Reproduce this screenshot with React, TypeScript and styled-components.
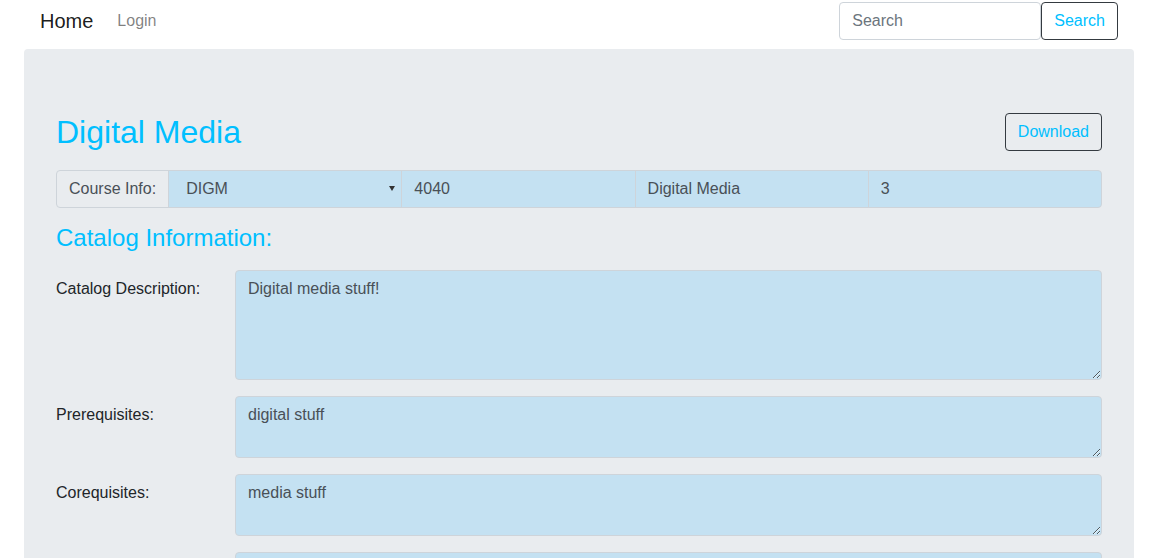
import { createGlobalStyle, styled } from 'styled-components';

const GlobalStyle = createGlobalStyle`
    * {
        box-sizing: border-box;
    }
    body {
        margin: 0;
        font-family: "Liberation Sans", Arial, sans-serif;
        font-size: 16px;
        line-height: 1.5;
        color: #212529;
        background: #fff;
    }
`;

const accent = '#00bfff';
const fieldBg = '#c4e1f2';

type Row = {
    label: string;
    value: string;
    rows: number;
};

const catalogRows: Row[] = [
    { label: 'Catalog Description:', value: 'Digital media stuff!', rows: 4 },
    { label: 'Prerequisites:', value: 'digital stuff', rows: 2 },
    { label: 'Corequisites:', value: 'media stuff', rows: 2 },
    { label: 'Restrictions:', value: '', rows: 2 },
];

export default function App() {
    return (
        <>
            <GlobalStyle />
            <Navbar>
                <Brand href='#'>Home</Brand>
                <NavLink href='#'>Login</NavLink>
                <SearchForm onSubmit={(e) => e.preventDefault()}>
                    <SearchInput placeholder='Search' />
                    <OutlineButton type='submit'>Search</OutlineButton>
                </SearchForm>
            </Navbar>
            <Jumbotron>
                <Header>
                    <Title>Digital Media</Title>
                    <OutlineButton>Download</OutlineButton>
                </Header>
                <InputGroup>
                    <GroupLabel>Course Info:</GroupLabel>
                    <SelectWrap>
                        <GroupSelect defaultValue='DIGM'>
                            <option>DIGM</option>
                            <option>ART</option>
                            <option>CS</option>
                        </GroupSelect>
                        <SelectArrow />
                    </SelectWrap>
                    <GroupInput defaultValue='4040' />
                    <GroupInput defaultValue='Digital Media' />
                    <GroupInput defaultValue='3' $last />
                </InputGroup>
                <SectionTitle>Catalog Information:</SectionTitle>
                {catalogRows.map((row) => (
                    <FormRow key={row.label}>
                        <FieldLabel>{row.label}</FieldLabel>
                        <TextArea rows={row.rows} defaultValue={row.value} />
                    </FormRow>
                ))}
            </Jumbotron>
        </>
    );
}

const Navbar = styled.nav`
    display: flex;
    align-items: center;
    height: 42px;
    padding: 2px 50px 2px 40px;
`;

const Brand = styled.a`
    font-size: 20px;
    line-height: 1.5;
    color: rgba(0, 0, 0, 0.9);
    text-decoration: none;
    margin-right: 16px;
`;

const NavLink = styled.a`
    padding: 0 8px;
    color: rgba(0, 0, 0, 0.5);
    text-decoration: none;
`;

const SearchForm = styled.form`
    display: flex;
    margin-left: auto;
`;

const SearchInput = styled.input`
    width: 202px;
    height: 38px;
    padding: 6px 12px;
    font: inherit;
    color: #495057;
    border: 1px solid #ced4da;
    border-radius: 4px;
    outline: none;

    &::placeholder {
        color: #6c757d;
    }
`;

const OutlineButton = styled.button`
    height: 38px;
    padding: 6px 12px;
    font: inherit;
    color: ${accent};
    background: transparent;
    border: 1px solid #343a40;
    border-radius: 4px;
    cursor: pointer;
`;

const Jumbotron = styled.main`
    margin: 7px 34px 0 24px;
    padding: 64px 32px;
    background-color: #e9ecef;
    border-radius: 4px;
`;

const Header = styled.div`
    display: flex;
    align-items: center;
    justify-content: space-between;
    margin-bottom: 19px;
`;

const Title = styled.h2`
    margin: 0;
    font-size: 32px;
    font-weight: 400;
    line-height: 1.2;
    color: ${accent};
`;

const InputGroup = styled.div`
    display: grid;
    grid-template-columns: auto repeat(4, minmax(0, 1fr));
    height: 38px;
`;

const GroupLabel = styled.span`
    display: flex;
    align-items: center;
    padding: 6px 12px;
    color: #495057;
    background-color: #e9ecef;
    border: 1px solid #ced4da;
    border-radius: 4px 0 0 4px;
    white-space: nowrap;
`;

const SelectWrap = styled.div`
    position: relative;
    margin-left: -1px;
`;

const GroupSelect = styled.select`
    appearance: none;
    display: block;
    width: 100%;
    height: 38px;
    padding: 6px 24px 6px 17px;
    font: inherit;
    color: #495057;
    background-color: ${fieldBg};
    border: 1px solid #ced4da;
    border-radius: 0;
    outline: none;
`;

const SelectArrow = styled.span`
    position: absolute;
    top: 16px;
    right: 7px;
    width: 0;
    height: 0;
    border-left: 3px solid transparent;
    border-right: 3px solid transparent;
    border-top: 5px solid #333;
    pointer-events: none;
`;

const GroupInput = styled.input<{ $last?: boolean }>`
    display: block;
    width: calc(100% + 1px);
    min-width: 0;
    height: 38px;
    padding: 6px 12px;
    margin-left: -1px;
    font: inherit;
    color: #495057;
    background-color: ${fieldBg};
    border: 1px solid #ced4da;
    border-radius: ${(p) => (p.$last ? '0 4px 4px 0' : '0')};
    outline: none;
`;

const SectionTitle = styled.h4`
    margin: 16px 0 17px;
    font-size: 24px;
    font-weight: 400;
    line-height: 1.2;
    color: ${accent};
`;

const FormRow = styled.div`
    display: grid;
    grid-template-columns: 179px 1fr;
    margin-bottom: 16px;
`;

const FieldLabel = styled.label`
    padding-top: 7px;
    line-height: 1.5;
`;

const TextArea = styled.textarea`
    display: block;
    width: 100%;
    padding: 6px 12px;
    font: inherit;
    line-height: 1.5;
    color: #495057;
    background-color: ${fieldBg};
    border: 1px solid #ced4da;
    border-radius: 4px;
    outline: none;
`;
